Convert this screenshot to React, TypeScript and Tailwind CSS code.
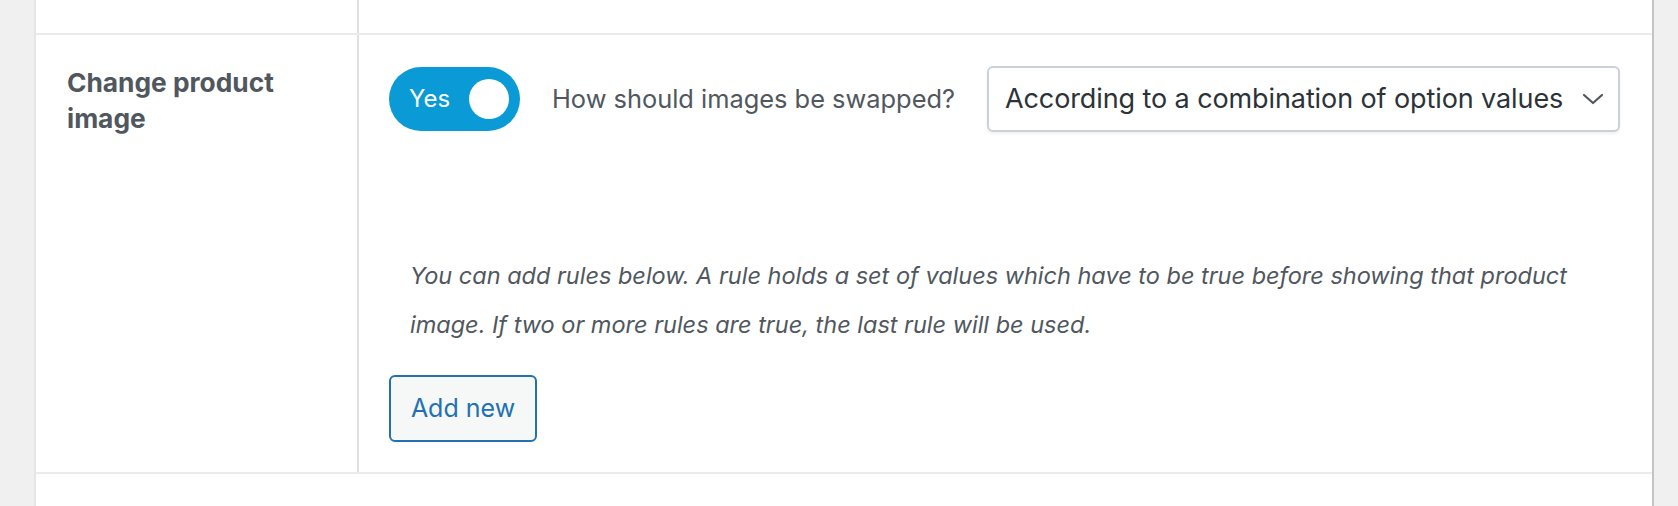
const font = { fontFamily: "Inter, 'Noto Sans', sans-serif" }

function Toggle() {
  return (
    <div className="flex h-[64px] w-[131px] shrink-0 items-center justify-between rounded-full bg-[#0a9ad5] pl-[20px] pr-[11px]">
      <span className="text-[24px] leading-none text-white">Yes</span>
      <span className="h-[40px] w-[40px] rounded-full bg-white" />
    </div>
  )
}

function SwapSelect() {
  return (
    <div className="flex h-[66px] w-[633px] shrink-0 items-center rounded-[6px] border-2 border-[#ccd0d8] bg-white pl-[16px] pr-[14px] shadow-[0_2px_3px_rgba(0,0,0,0.06)]">
      <span className="flex-1 whitespace-nowrap text-[27px] tracking-[-0.1px] text-[#2c3338]">
        According to a combination of option values
      </span>
      <svg width="22" height="12" viewBox="0 0 22 12" fill="none" className="ml-[10px] shrink-0">
        <polyline points="2,2 11,10 20,2" stroke="#50575e" strokeWidth="2.2" strokeLinecap="round" strokeLinejoin="round" />
      </svg>
    </div>
  )
}

export default function App() {
  return (
    <div className="flex h-[506px] w-full bg-[#f0f0f1]" style={font}>
      <div className="ml-[34px] flex w-[1620px] flex-col border-x-2 border-l-[#e6e6e6] border-r-[#c3c4c7] bg-white">
        {/* previous row, cut off */}
        <div className="flex h-[35px] border-b-2 border-[#ebebeb]">
          <div className="w-[323px] border-r-2 border-[#e0e0e0]" />
          <div className="flex-1" />
        </div>

        <div className="flex h-[439px] border-b-2 border-[#ebebeb]">
          <div className="w-[323px] shrink-0 border-r-2 border-[#e0e0e0] pl-[31px] pt-[30px]">
            <div className="text-[26.3px] font-bold leading-[36px] text-[#50575e]">
              Change product
              <br />
              image
            </div>
          </div>

          <div className="flex-1 pl-[30px] pr-[34px] pt-[31px]">
            <div className="flex items-center">
              <Toggle />
              <span className="ml-[32px] whitespace-nowrap text-[25.4px] text-[#50575e]">How should images be swapped?</span>
              <div className="ml-[32px]">
                <SwapSelect />
              </div>
            </div>

            <p className="ml-[21px] mt-[119px] whitespace-nowrap text-[23.5px] italic leading-[49px] text-[#50575e]">
              You can add rules below. A rule holds a set of values which have to be true before showing that product
              <br />
              image. If two or more rules are true, the last rule will be used.
            </p>

            <button className="mt-[26px] h-[67px] w-[148px] rounded-[6px] border-2 border-[#2271b1] bg-[#f6f7f7] text-[25px] text-[#2271b1]">
              Add new
            </button>
          </div>
        </div>

        <div className="flex-1" />
      </div>
    </div>
  )
}
